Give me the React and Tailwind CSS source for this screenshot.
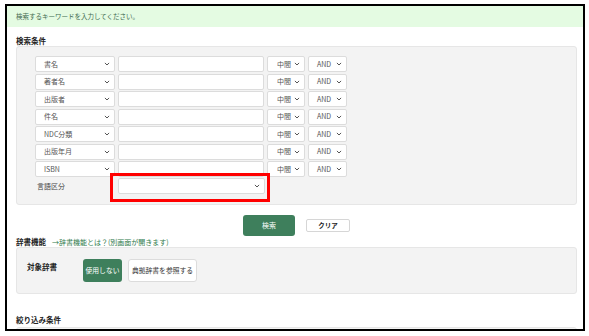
import React from "react";

const font = { fontFamily: '"Noto Sans CJK JP", "Noto Sans", sans-serif' };

const rows = ["書名", "著者名", "出版者", "件名", "NDC分類", "出版年月", "ISBN"];

// small chevron used by the fake select boxes
const Chevron = () => (
  <svg width="6" height="4" viewBox="0 0 6 4" className="shrink-0">
    <path d="M0.9 0.9 L3 3 L5.1 0.9" fill="none" stroke="#555" strokeWidth="1" />
  </svg>
);

function SelectBox({ label, className }) {
  return (
    <div
      className={`h-[16px] bg-white border border-[#dcdcdc] rounded-[2px] flex items-center justify-between pr-[4px] text-[7px] text-[#555] ${className}`}
    >
      <span>{label}</span>
      <Chevron />
    </div>
  );
}

export default function App() {
  return (
    <div className="w-[589px] h-[336px] bg-white overflow-hidden" style={font}>
      <div className="ml-[5px] mt-[4px] w-[580px] h-[327px] border-2 border-black overflow-hidden">
        {/* message bar */}
        <div className="h-[21px] bg-[#e4fbe2] flex items-center pl-[9px] text-[6.5px] text-[#3f6a50]">
          検索するキーワードを入力してください。
        </div>

        {/* search conditions */}
        <div className="mt-[8px] h-[11px] leading-[11px] pl-[9px] text-[7.5px] font-bold text-[#222]">
          検索条件
        </div>
        <div className="ml-[9px] w-[561px] h-[159px] bg-[#f3f3f3] border border-[#e6e6e6] rounded-[3px] pt-[9px] pl-[18px]">
          <div className="flex flex-col gap-[1.5px]">
            {rows.map((r) => (
              <div key={r} className="flex gap-[3px]">
                <SelectBox label={r} className="w-[80px] pl-[8px]" />
                <div className="w-[146px] h-[16px] bg-white border border-[#dcdcdc] rounded-[2px]" />
                <SelectBox label="中間" className="w-[38px] pl-[9px]" />
                <SelectBox label="AND" className="w-[39px] pl-[8px]" />
              </div>
            ))}
          </div>
          <div className="flex items-center mt-[1px]">
            <div className="w-[83px] pl-[2px] text-[7px] text-[#444]">言語区分</div>
            <div className="relative">
              <SelectBox label="" className="w-[147px] pl-[8px]" />
              <div className="absolute left-[-8px] top-[-5px] w-[160px] h-[29px] border-[3px] border-[#ff0000]" />
            </div>
          </div>
        </div>

        {/* buttons */}
        <div className="w-[561px] ml-[9px] mt-[10px] flex justify-center items-center gap-[11px]">
          <div className="w-[52px] h-[21px] bg-[#3e7f5c] rounded-[3px] flex items-center justify-center text-[7px] text-white">
            検索
          </div>
          <div className="w-[44px] h-[13px] bg-white border border-[#d6d6d6] rounded-[2px] flex items-center justify-center text-[6.5px] font-bold text-[#222]">
            クリア
          </div>
        </div>

        {/* dictionary */}
        <div className="mt-[1px] h-[10px] leading-[10px] pl-[9px] flex items-center text-[7.5px]">
          <span className="font-bold text-[#222]">辞書機能</span>
          <span className="ml-[6px] text-[7px] text-[#2f7a4c]">→辞書機能とは？(別画面が開きます)</span>
        </div>
        <div className="ml-[9px] w-[561px] h-[47px] bg-[#f3f3f3] border border-[#e6e6e6] rounded-[3px] pt-[11px] pl-[10px] flex items-start">
          <div className="w-[56px] pt-[2px] text-[7.5px] font-bold text-[#222]">対象辞書</div>
          <div className="flex gap-[6px]">
            <div className="w-[39px] h-[23px] bg-[#3e7f5c] rounded-[3px] flex items-center justify-center text-[6.8px] text-white">
              使用しない
            </div>
            <div className="w-[69px] h-[23px] bg-white border border-[#dcdcdc] rounded-[3px] flex items-center justify-center text-[6.8px] text-[#333]">
              典拠辞書を参照する
            </div>
          </div>
        </div>

        {/* narrowing conditions */}
        <div className="mt-[20px] h-[12px] leading-[12px] pl-[9px] text-[7.5px] font-bold text-[#222]">
          絞り込み条件
        </div>
        <div className="mt-[1px] ml-[9px] w-[561px] h-[30px] bg-[#f3f3f3] border border-[#e6e6e6] rounded-[3px]" />
      </div>
    </div>
  );
}
